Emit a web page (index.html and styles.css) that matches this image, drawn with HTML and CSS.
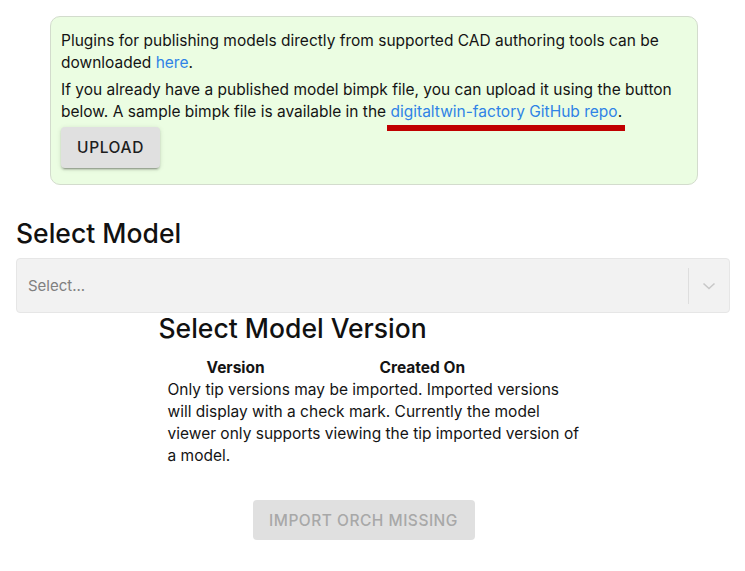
FILE: index.html
```html
<!DOCTYPE html>
<html>
<head>
<meta charset="utf-8">
<link rel="stylesheet" href="styles.css">
</head>
<body>
<div class="page">
  <div class="notice">
    <p class="p1">Plugins for publishing models directly from supported CAD authoring tools can be downloaded <a href="#">here</a>.</p>
    <p class="p2">If you already have a published model bimpk file, you can upload it using the button below. A sample bimpk file is available in the <span class="linkwrap"><a href="#">digitaltwin-factory GitHub repo</a><span class="mark"></span></span>.</p>
    <button class="upload">UPLOAD</button>
  </div>

  <h2 class="h-model">Select Model</h2>
  <div class="select">
    <span class="placeholder">Select...</span>
    <span class="sep"></span>
    <span class="chev"><svg width="20" height="20" viewBox="0 0 20 20"><path d="M4.5 7.5 L10 12.5 L15.5 7.5" fill="none" stroke="#c8c8c8" stroke-width="1.6"/></svg></span>
  </div>

  <div class="version">
    <h2 class="h-version">Select Model Version</h2>
    <div class="thead">
      <span class="th th-v">Version</span>
      <span class="th th-c">Created On</span>
    </div>
    <p class="info">Only tip versions may be imported. Imported versions will display with a check mark. Currently the model viewer only supports viewing the tip imported version of a model.</p>
    <div class="actions">
      <button class="import" disabled>IMPORT ORCH MISSING</button>
    </div>
  </div>
</div>
</body>
</html>
```
FILE: styles.css
```css
html, body { margin: 0; padding: 0; background: #fff; }
body { font-family: Inter, "Noto Sans", sans-serif; color: #141414; }
.page { padding: 16px 15px 0 16px; }
.notice {
  margin: 0 32px 0 34px;
  background: #ebfde2;
  border: 1px solid #d3dccd;
  border-radius: 10px;
  padding: 13px 10px 16px 10px;
  font-size: 15.5px;
  line-height: 21.5px;
}
.notice p { margin: 0; }
.notice .p2 { margin-top: 6px; }
.notice a { color: #2f83e6; text-decoration: none; }
.linkwrap { position: relative; }
.mark {
  position: absolute; left: -4px; right: -7px; top: 23px; height: 6px;
  background: #c00000;
}
.upload {
  margin-top: 5px;
  font-family: Inter, sans-serif;
  font-size: 15.5px; font-weight: 500; letter-spacing: 0.6px;
  color: #1e1e1e;
  background: #e0e0e0;
  border: none; border-radius: 4px;
  width: 99px; height: 41px;
  box-shadow: 0 3px 1px -2px rgba(0,0,0,.2), 0 2px 2px 0 rgba(0,0,0,.14), 0 1px 5px 0 rgba(0,0,0,.12);
}
.h-model {
  margin: 32px 0 0 0;
  font-size: 26.5px; font-weight: 500; line-height: 32px; color: #111;
}
.select {
  margin-top: 9px;
  height: 53px;
  background: #f2f2f2;
  border: 1px solid #e6e6e6;
  border-radius: 4px;
  display: flex; align-items: center;
}
.placeholder { flex: 1; padding-left: 11px; font-size: 15px; color: #808080; }
.sep { width: 1px; height: 36px; background: #dedede; }
.chev { width: 40px; display: flex; justify-content: center; }
.version { width: 430px; margin: 0 auto; padding-left: 1px; }
.h-version {
  margin: 0; font-size: 26.5px; font-weight: 500; line-height: 30px; color: #111;
}
.thead {
  margin-top: 14px; display: flex; font-size: 15.5px; font-weight: 700; line-height: 21px;
}
.th-v { width: 58px; margin-left: 48px; }
.th-c { margin-left: 115px; }
.info {
  margin: 1px 0 0 9px; width: 415px;
  font-size: 15.5px; line-height: 22px; color: #141414;
}
.actions { display: flex; justify-content: center; margin-top: 33px; }
.import {
  font-family: Inter, sans-serif; font-size: 15.5px; font-weight: 500; letter-spacing: 0.5px;
  color: #a8a8a8; background: #e0e0e0;
  border: none; border-radius: 4px;
  width: 222px; height: 40px;
  position: relative; left: -10px;
}
```
